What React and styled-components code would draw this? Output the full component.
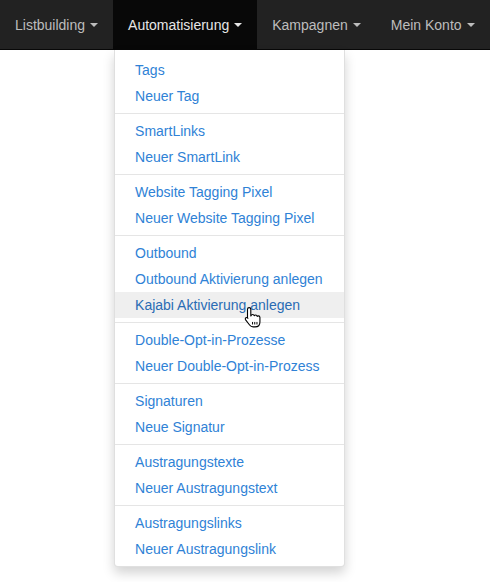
import React from "react";
import styled, { createGlobalStyle } from "styled-components";

const GlobalStyle = createGlobalStyle`
  html, body {
    margin: 0;
    padding: 0;
    background: #fff;
    font-family: "Liberation Sans", Arial, sans-serif;
  }
`;

const navItems = [
  { label: "Listbuilding" },
  { label: "Automatisierung", open: true },
  { label: "Kampagnen" },
  { label: "Mein Konto" },
];

const menuGroups = [
  ["Tags", "Neuer Tag"],
  ["SmartLinks", "Neuer SmartLink"],
  ["Website Tagging Pixel", "Neuer Website Tagging Pixel"],
  ["Outbound", "Outbound Aktivierung anlegen", "Kajabi Aktivierung anlegen"],
  ["Double-Opt-in-Prozesse", "Neuer Double-Opt-in-Prozess"],
  ["Signaturen", "Neue Signatur"],
  ["Austragungstexte", "Neuer Austragungstext"],
  ["Austragungslinks", "Neuer Austragungslink"],
];

const HOVERED = "Kajabi Aktivierung anlegen";

const HandCursor = () => (
  <svg width="20" height="22" viewBox="0 0 18 20">
    <path
      d="M5.5 1.5c.9 0 1.5.6 1.5 1.5v6l.2-.1c.2-.8.8-1.2 1.5-1.2s1.3.5 1.4 1.2c.3-.5.8-.7 1.3-.7.7 0 1.3.5 1.4 1.2.3-.3.7-.4 1.1-.4.8 0 1.4.6 1.4 1.4v4.1c0 2.6-1.8 4.5-4.4 4.5H9.1c-1.4 0-2.4-.6-3.2-1.7L2.3 12.6c-.5-.7-.3-1.5.3-1.9.6-.4 1.4-.2 1.8.4L4 11V3c0-.9.6-1.5 1.5-1.5z"
      fill="#fff"
      stroke="#000"
      strokeWidth="1"
      strokeLinejoin="round"
    />
    <path d="M8.6 14.5v2.3M10.6 14.5v2.3M12.6 14.5v2.3" stroke="#000" strokeWidth="0.9" />
  </svg>
);

const DropdownMenu = () => (
  <Dropdown>
    {menuGroups.map((group, gi) => (
      <React.Fragment key={gi}>
        {gi > 0 && <Divider />}
        {group.map((entry) => (
          <MenuItem key={entry} $hover={entry === HOVERED}>
            {entry}
            {entry === HOVERED && (
              <Cursor>
                <HandCursor />
              </Cursor>
            )}
          </MenuItem>
        ))}
      </React.Fragment>
    ))}
  </Dropdown>
);

const App = () => {
  return (
    <Page>
      <GlobalStyle />
      <Navbar>
        {navItems.map((item) => (
          <NavItem key={item.label} $open={item.open}>
            <NavLink $open={item.open}>
              {item.label}
              <Caret />
            </NavLink>
            {item.open && <DropdownMenu />}
          </NavItem>
        ))}
      </Navbar>
    </Page>
  );
};

const Page = styled.div`
  min-height: 582px;
  background: #fff;
`;

const Navbar = styled.nav`
  display: flex;
  height: 50px;
  background-color: #222;
  border-bottom: 1px solid #080808;
  box-sizing: border-box;
`;

const NavItem = styled.div`
  position: relative;
  flex-shrink: 0;
  height: 50px;
  background-color: ${(p) => (p.$open ? "#080808" : "transparent")};
  z-index: ${(p) => (p.$open ? 10 : 1)};
`;

const NavLink = styled.a`
  display: flex;
  align-items: center;
  height: 50px;
  padding: 0 15px;
  font-size: 14px;
  white-space: nowrap;
  color: ${(p) => (p.$open ? "#e6e6e6" : "#bdbdbd")};
  cursor: pointer;
`;

const Caret = styled.span`
  display: inline-block;
  width: 0;
  height: 0;
  margin-left: 5px;
  border-top: 4px solid currentColor;
  border-left: 4px solid transparent;
  border-right: 4px solid transparent;
`;

const Dropdown = styled.div`
  position: absolute;
  top: 50px;
  left: 1px;
  width: 231px;
  padding: 7px 0 4px;
  background-color: #fff;
  border: 1px solid rgba(0, 0, 0, 0.12);
  border-top: none;
  border-radius: 0 0 4px 4px;
  box-shadow: 0 6px 12px rgba(0, 0, 0, 0.175);
  box-sizing: border-box;
`;

const MenuItem = styled.a`
  position: relative;
  display: block;
  padding: 3px 20px;
  font-size: 14px;
  line-height: 20px;
  white-space: nowrap;
  color: ${(p) => (p.$hover ? "#2a6cb4" : "#2f82d6")};
  background-color: ${(p) => (p.$hover ? "#efefef" : "transparent")};
`;

const Divider = styled.div`
  height: 1px;
  margin: 4px 0;
  background-color: #e5e5e5;
`;

const Cursor = styled.span`
  position: absolute;
  left: 128px;
  top: 14px;
  line-height: 0;
`;

export default App;
